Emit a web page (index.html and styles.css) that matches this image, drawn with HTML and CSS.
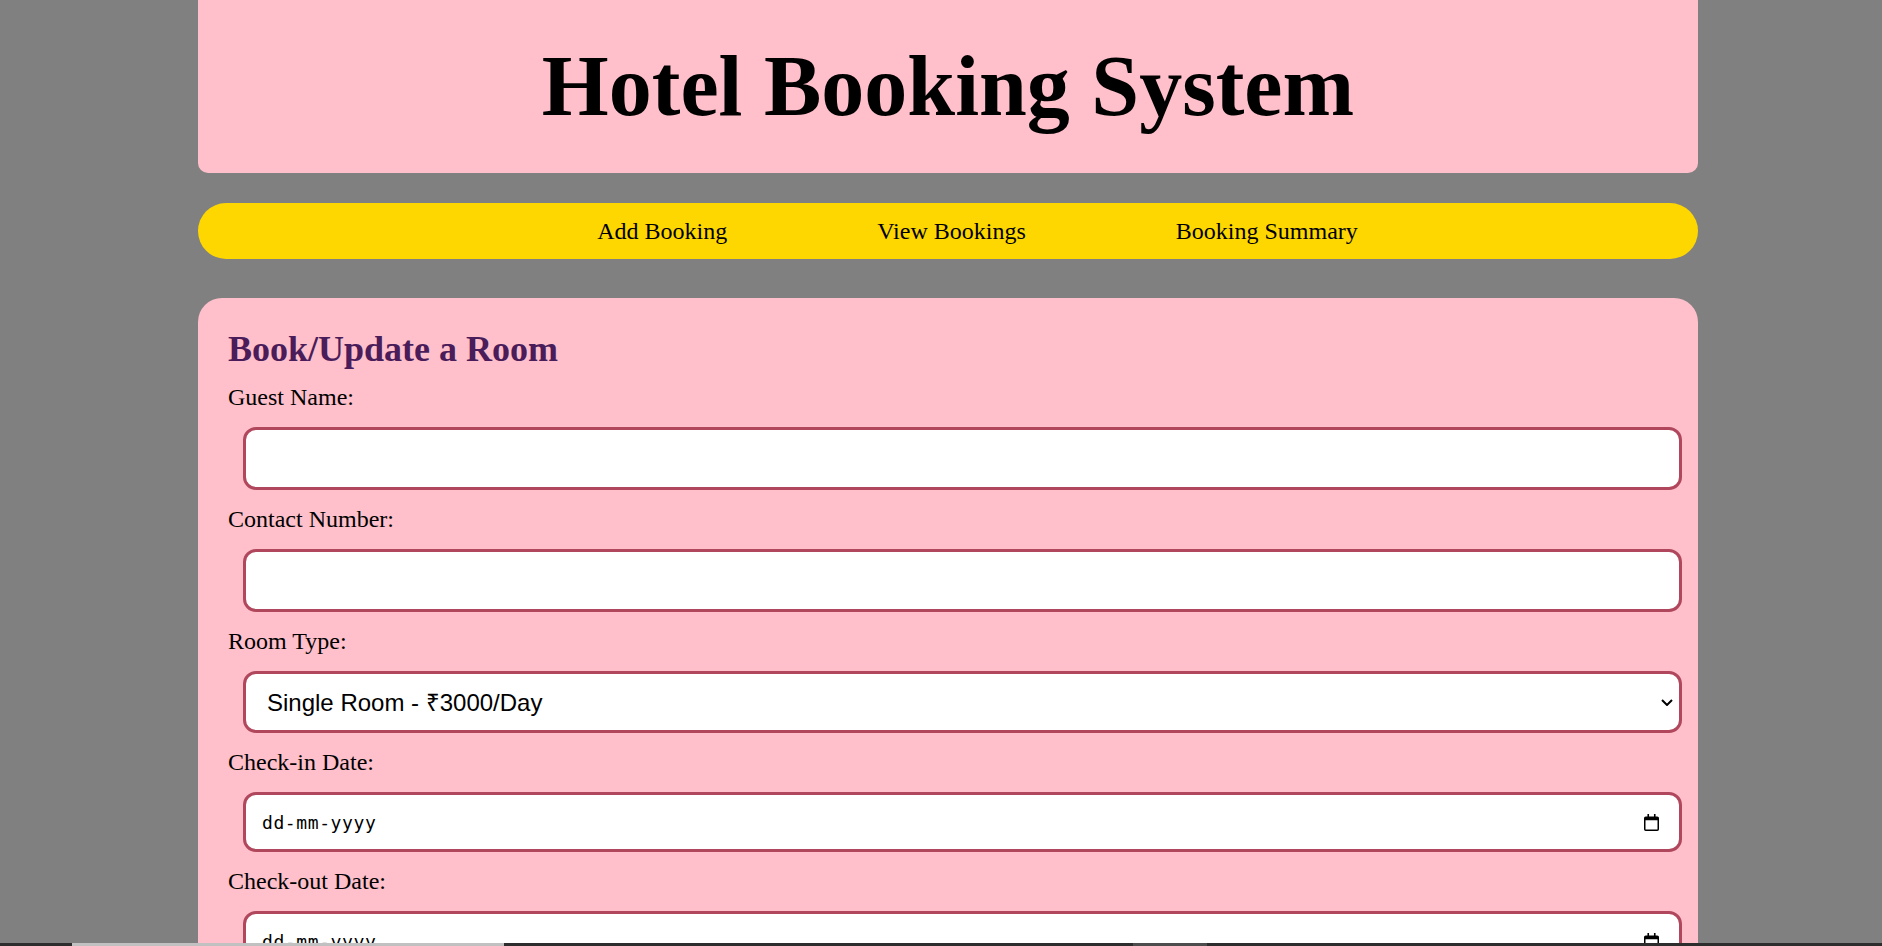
FILE: index.html
```html
<!DOCTYPE html>
<html lang="en">
<head>
<meta charset="utf-8">
<title>Hotel Booking System</title>
<link rel="stylesheet" href="styles.css">
</head>
<body>
<div class="page">
  <header class="site-header">
    <h1 class="site-title">Hotel Booking System</h1>
  </header>
  <nav class="main-nav">
    <a href="#" class="nav-link">Add Booking</a>
    <a href="#" class="nav-link">View Bookings</a>
    <a href="#" class="nav-link">Booking Summary</a>
  </nav>
  <section class="card">
    <h2 class="card-title">Book/Update a Room</h2>
    <form class="booking-form">
      <label class="field-label" for="guest">Guest Name:</label>
      <div class="field-box">
        <input class="field field-text" type="text" id="guest">
      </div>
      <label class="field-label" for="contact">Contact Number:</label>
      <div class="field-box">
        <input class="field field-text" type="text" id="contact">
      </div>
      <label class="field-label" for="room">Room Type:</label>
      <div class="field-box">
        <select class="field field-select" id="room">
          <option>Single Room - ₹3000/Day</option>
          <option>Double Room - ₹5000/Day</option>
          <option>Suite - ₹8000/Day</option>
        </select>
        <svg class="select-chevron" width="12" height="7" viewBox="0 0 12 7" aria-hidden="true"><path d="M1 1l5 5 5-5" fill="none" stroke="#000" stroke-width="2"/></svg>
      </div>
      <label class="field-label" for="checkin">Check-in Date:</label>
      <div class="field-box">
        <input class="field field-date" type="text" id="checkin" placeholder="dd-mm-yyyy">
        <svg class="date-icon" width="15" height="17" viewBox="0 0 15 17" aria-hidden="true"><path d="M4.25 0v3.5M10.75 0v3.5" stroke="#000" stroke-width="1.6"/><rect x="0.75" y="3.25" width="13.5" height="13" rx="1" fill="none" stroke="#000" stroke-width="1.5"/><rect x="0.75" y="3.25" width="13.5" height="3" fill="#000"/></svg>
      </div>
      <label class="field-label" for="checkout">Check-out Date:</label>
      <div class="field-box">
        <input class="field field-date" type="text" id="checkout" placeholder="dd-mm-yyyy">
        <svg class="date-icon" width="15" height="17" viewBox="0 0 15 17" aria-hidden="true"><path d="M4.25 0v3.5M10.75 0v3.5" stroke="#000" stroke-width="1.6"/><rect x="0.75" y="3.25" width="13.5" height="13" rx="1" fill="none" stroke="#000" stroke-width="1.5"/><rect x="0.75" y="3.25" width="13.5" height="3" fill="#000"/></svg>
      </div>
    </form>
  </section>
</div>
<div class="bottom-strip"></div>
</body>
</html>
```

FILE: styles.css
```css
html, body {
  margin: 0;
  background: #808080;
}

body {
  padding: 0 0 0 14px;
  font-family: "Liberation Serif", "Times New Roman", serif;
  color: #000;
}

.page {
  width: 1500px;
  margin: 0 auto;
}

.site-header {
  background: #ffc0cb;
  border-radius: 0 0 10px 10px;
  padding: 39px 0;
  text-align: center;
}

.site-title {
  margin: 0;
  font-size: 86px;
  line-height: 95px;
  font-weight: bold;
}

.main-nav {
  margin-top: 30px;
  height: 56px;
  background: #ffd700;
  border-radius: 28px;
  display: flex;
  align-items: center;
  justify-content: center;
  gap: 150px;
  padding-left: 59px;
  box-sizing: border-box;
}

.nav-link {
  color: #000;
  text-decoration: none;
  font-size: 24px;
  line-height: 27px;
}

.card {
  margin-top: 39px;
  background: #ffc0cb;
  border-radius: 24px;
  padding: 31px 30px 40px;
}

.card-title {
  margin: 0 0 13px;
  font-size: 36px;
  line-height: 41px;
  font-weight: bold;
  color: #4a1c5a;
}

.booking-form {
  display: flex;
  flex-direction: column;
  align-items: flex-start;
}

.field-label {
  display: block;
  font-size: 24px;
  line-height: 28px;
}

.field-box {
  position: relative;
  width: 1439px;
  margin: 16px 0 15px 15px;
}

.field {
  display: block;
  box-sizing: border-box;
  width: 100%;
  margin: 0;
  border: 3px solid #b0475c;
  border-radius: 13px;
  background: #fff;
  padding: 0 16px;
  outline: none;
  color: #000;
}

.field-text {
  height: 63px;
  font-family: "Liberation Sans", Arial, sans-serif;
  font-size: 24px;
}

.field-select {
  height: 62px;
  font-family: "Liberation Sans", Arial, sans-serif;
  font-size: 24px;
  padding-left: 21px;
  -webkit-appearance: none;
  appearance: none;
}

.field-date {
  height: 60px;
  font-family: "DejaVu Sans Mono", "Liberation Mono", monospace;
  font-size: 18px;
  letter-spacing: 0.6px;
}

.field-date::placeholder {
  color: #000;
  opacity: 1;
}

.select-chevron {
  position: absolute;
  right: 9px;
  top: 50%;
  margin-top: -3px;
  pointer-events: none;
}

.date-icon {
  position: absolute;
  right: 23px;
  top: 50%;
  margin-top: -8px;
  pointer-events: none;
}

.bottom-strip {
  position: fixed;
  left: 0;
  right: 0;
  bottom: 0;
  height: 3px;
  background: linear-gradient(to right,
    #2d2d2d 0, #2d2d2d 72px,
    #c1c1c1 72px, #c1c1c1 504px,
    #2d2d2d 504px, #2d2d2d 1133px,
    #4d4d4d 1133px, #4d4d4d 1207px,
    #2d2d2d 1207px);
}
```
